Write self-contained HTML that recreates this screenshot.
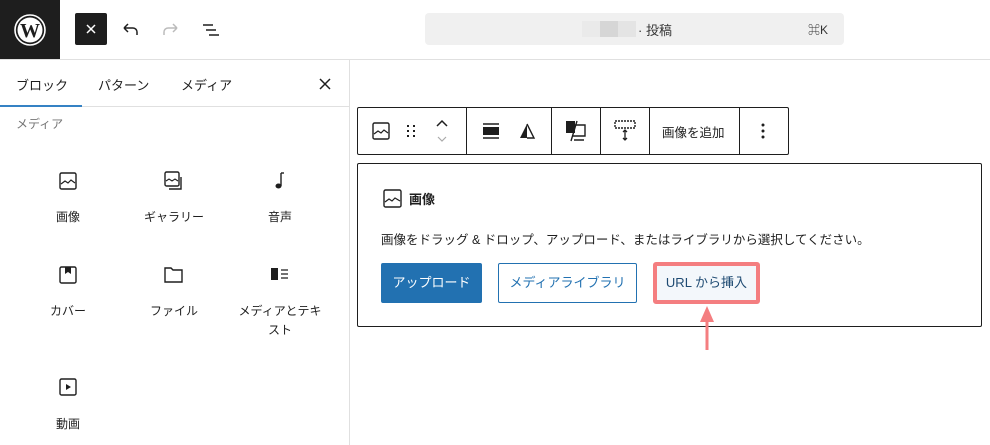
<!DOCTYPE html>
<html><head><meta charset="utf-8"><style>
*{margin:0;padding:0;box-sizing:border-box}
body{width:990px;height:445px;overflow:hidden;background:#fff;font-family:"Liberation Sans","Noto Sans CJK JP",sans-serif;color:#1e1e1e;position:relative}
.a{position:absolute}
.tab{position:absolute;top:75px;font-size:13px}
.lbl{position:absolute;width:106px;text-align:center;font-size:12px;line-height:19px;color:#1e1e1e}
.ic{position:absolute}
.sep{position:absolute;top:108px;width:1px;height:46px;background:#1e1e1e}
</style></head><body>
<div class="a" style="left:0;top:0;width:60px;height:60px;background:#1e1e1e"></div>
<svg class="a" style="left:14px;top:14px" width="32" height="32" viewBox="0 0 32 32"><circle cx="16" cy="16" r="15" fill="none" stroke="#fff" stroke-width="1.6"/><circle cx="16" cy="16" r="12.5" fill="#fff"/><text x="16" y="23" text-anchor="middle" font-family="Liberation Serif" font-weight="bold" font-size="20" fill="#1e1e1e">W</text></svg>
<div class="a" style="left:75px;top:13px;width:32px;height:32px;background:#1e1e1e;border-radius:2px"></div>
<svg class="a" style="left:85px;top:23px" width="12" height="12"><path d="M2 2L10 10M10 2L2 10" stroke="#fff" stroke-width="1.5"/></svg>
<svg class="a" style="left:120px;top:20px" width="20" height="20"><path d="M4 8h9a4 4 0 0 1 4 4v3M4 8l4-4M4 8l4 4" fill="none" stroke="#1e1e1e" stroke-width="1.5"/></svg>
<svg class="a" style="left:161px;top:20px" width="20" height="20"><path d="M16 8H7a4 4 0 0 0-4 4v3M16 8l-4-4M16 8l-4 4" fill="none" stroke="#bbb" stroke-width="1.5"/></svg>
<svg class="a" style="left:201px;top:20px" width="20" height="20"><path d="M2 5h10M5 10h10M8 15h10" stroke="#1e1e1e" stroke-width="1.5"/></svg>
<div class="a" style="left:425px;top:13px;width:419px;height:32px;background:#f0f0f0;border-radius:4px"></div>
<div class="a" style="left:582px;top:21px;width:18px;height:16px;background:#eaeaea"></div>
<div class="a" style="left:600px;top:21px;width:18px;height:16px;background:#d6d6d6"></div>
<div class="a" style="left:618px;top:21px;width:18px;height:16px;background:#e4e4e4"></div>
<div class="a" style="left:638px;top:20px;font-size:13px;color:#333">· 投稿</div>
<div class="a" style="left:808px;top:21px;font-size:12px;color:#333">⌘K</div>
<div class="a" style="left:0;top:59px;width:990px;height:1px;background:#e0e0e0"></div>
<div class="a" style="left:349px;top:60px;width:1px;height:385px;background:#e0e0e0"></div>
<div class="tab" style="left:16px">ブロック</div>
<div class="tab" style="left:98px">パターン</div>
<div class="tab" style="left:181px">メディア</div>
<svg class="a" style="left:319px;top:78px" width="12" height="12"><path d="M1 1L11 11M11 1L1 11" stroke="#1e1e1e" stroke-width="1.5"/></svg>
<div class="a" style="left:0;top:106px;width:349px;height:1px;background:#e0e0e0"></div>
<div class="a" style="left:0;top:105px;width:82px;height:2px;background:#3582c4"></div>
<div class="a" style="left:16px;top:115px;font-size:12px;color:#757575">メディア</div>
<svg class="ic" style="left:59px;top:172px" width="18" height="18"><rect x="1" y="1" width="16" height="16" rx="1.5" fill="none" stroke="#1e1e1e" stroke-width="1.4"/><path d="M2 12l4-3 3 2 3-3 4 3" fill="none" stroke="#1e1e1e" stroke-width="1.2"/></svg>
<div class="lbl" style="left:15px;top:208px">画像</div>
<svg class="ic" style="left:164px;top:171px" width="20" height="20"><rect x="1" y="1" width="14" height="14" rx="1.5" fill="none" stroke="#1e1e1e" stroke-width="1.4"/><path d="M2 10l3-2 3 2 3-2 3 2" fill="none" stroke="#1e1e1e" stroke-width="1.1"/><path d="M5 18h12V6" fill="none" stroke="#1e1e1e" stroke-width="1.4"/></svg>
<div class="lbl" style="left:121px;top:208px">ギャラリー</div>
<svg class="ic" style="left:272px;top:172px" width="14" height="18"><path d="M9 1v13" stroke="#1e1e1e" stroke-width="1.4"/><path d="M9 1h3" stroke="#1e1e1e" stroke-width="1.4"/><ellipse cx="6.5" cy="14" rx="3" ry="2.5" fill="#1e1e1e"/></svg>
<div class="lbl" style="left:227px;top:208px">音声</div>
<svg class="ic" style="left:59px;top:266px" width="18" height="18"><rect x="1" y="1" width="16" height="16" rx="1.5" fill="none" stroke="#1e1e1e" stroke-width="1.4"/><path d="M6 1h6v7l-3-2-3 2z" fill="#1e1e1e"/></svg>
<div class="lbl" style="left:15px;top:302px">カバー</div>
<svg class="ic" style="left:164px;top:266px" width="20" height="18"><path d="M1 2h6l2 2h9v12H1z" fill="none" stroke="#1e1e1e" stroke-width="1.4"/></svg>
<div class="lbl" style="left:121px;top:302px">ファイル</div>
<svg class="ic" style="left:270px;top:267px" width="20" height="14"><rect x="1" y="1" width="7" height="12" fill="#1e1e1e"/><path d="M11 3h7M11 7h7M11 11h7" stroke="#1e1e1e" stroke-width="1.2"/></svg>
<div class="lbl" style="left:227px;top:302px">メディアとテキ<br>スト</div>
<svg class="ic" style="left:59px;top:378px" width="18" height="18"><rect x="1" y="1" width="16" height="16" rx="1.5" fill="none" stroke="#1e1e1e" stroke-width="1.4"/><path d="M7 6l5 3-5 3z" fill="#1e1e1e"/></svg>
<div class="lbl" style="left:15px;top:415px">動画</div>
<div class="a" style="left:357px;top:107px;width:432px;height:48px;border:1px solid #1e1e1e;border-radius:2px;background:#fff"></div>
<svg class="a" style="left:372px;top:122px" width="18" height="18"><rect x="1" y="1" width="16" height="16" rx="1.5" fill="none" stroke="#1e1e1e" stroke-width="1.4"/><path d="M2 12l4-3 3 2 3-3 4 3" fill="none" stroke="#1e1e1e" stroke-width="1.2"/></svg>
<svg class="a" style="left:405px;top:123px" width="12" height="16"><g fill="#1e1e1e"><rect x="2" y="2" width="2" height="2"/><rect x="8" y="2" width="2" height="2"/><rect x="2" y="7" width="2" height="2"/><rect x="8" y="7" width="2" height="2"/><rect x="2" y="12" width="2" height="2"/><rect x="8" y="12" width="2" height="2"/></g></svg>
<svg class="a" style="left:435px;top:118px" width="14" height="28"><path d="M2 8l5-5 5 5" fill="none" stroke="#1e1e1e" stroke-width="1.5"/><path d="M3 19l4 4 4-4" fill="none" stroke="#aaa" stroke-width="1.2"/></svg>
<div class="sep" style="left:466px"></div>
<svg class="a" style="left:482px;top:122px" width="18" height="18"><path d="M1 2h16M1 16h16" stroke="#1e1e1e" stroke-width="1.5"/><rect x="1" y="5" width="16" height="8" fill="#1e1e1e"/></svg>
<svg class="a" style="left:518px;top:122px" width="18" height="18"><path d="M9 2L2 16h7z" fill="#1e1e1e"/><path d="M9 2L16 16H9" fill="none" stroke="#1e1e1e" stroke-width="1.4"/></svg>
<div class="sep" style="left:551px"></div>
<svg class="a" style="left:564px;top:119px" width="24" height="24"><path d="M2 2h9v12H2z" fill="#1e1e1e"/><path d="M11 6h10v11H8" fill="none" stroke="#1e1e1e" stroke-width="1.4"/><path d="M13 2L7 22M10 21h10" stroke="#1e1e1e" stroke-width="1.4"/></svg>
<div class="sep" style="left:600px"></div>
<svg class="a" style="left:613px;top:118px" width="24" height="24"><rect x="2" y="3" width="20" height="7" fill="none" stroke="#1e1e1e" stroke-width="1.4" stroke-dasharray="2 1"/><path d="M12 12v10M10 14l2-2 2 2M10 20l2 2 2-2" fill="none" stroke="#1e1e1e" stroke-width="1.3"/></svg>
<div class="sep" style="left:649px"></div>
<div class="a" style="left:662px;top:122px;font-size:12.5px">画像を追加</div>
<div class="sep" style="left:739px"></div>
<svg class="a" style="left:760px;top:122px" width="6" height="18"><g fill="#1e1e1e"><circle cx="3" cy="3" r="1.5"/><circle cx="3" cy="9" r="1.5"/><circle cx="3" cy="15" r="1.5"/></g></svg>
<div class="a" style="left:357px;top:163px;width:625px;height:164px;border:1px solid #1e1e1e;border-radius:2px;background:#fff"></div>
<svg class="a" style="left:383px;top:189px" width="19" height="19"><rect x="1" y="1" width="17" height="17" rx="1.5" fill="none" stroke="#1e1e1e" stroke-width="1.4"/><path d="M2 13l4-3 3 2 3-3 5 3" fill="none" stroke="#1e1e1e" stroke-width="1.2"/></svg>
<div class="a" style="left:409px;top:189px;font-size:13px;font-weight:bold">画像</div>
<div class="a" style="left:381px;top:229px;font-size:12.5px">画像をドラッグ &amp; ドロップ、アップロード、またはライブラリから選択してください。</div>
<div class="a" style="left:381px;top:263px;width:101px;height:40px;background:#2271b1;border-radius:2px;color:#fff;font-size:13px;text-align:center;line-height:40px">アップロード</div>
<div class="a" style="left:498px;top:263px;width:139px;height:40px;border:1px solid #2271b1;border-radius:2px;color:#2271b1;font-size:13px;text-align:center;line-height:38px">メディアライブラリ</div>
<div class="a" style="left:653px;top:262px;width:107px;height:42px;border:4px solid #f47e80;border-radius:3px;background:#f3f7fb;color:#1e4a72;font-size:13px;text-align:center;line-height:34px">URL から挿入</div>
<svg class="a" style="left:697px;top:304px" width="20" height="46"><path d="M10 12v34" stroke="#f47e80" stroke-width="3"/><path d="M3 18L10 2l7 16z" fill="#f47e80"/></svg>
</body></html>
